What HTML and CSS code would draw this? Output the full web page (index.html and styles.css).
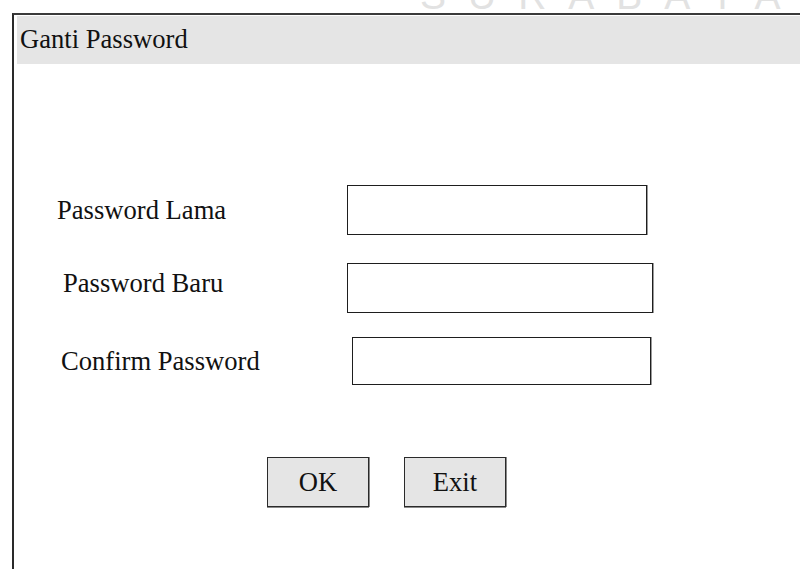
FILE: index.html
```html
<!DOCTYPE html>
<html lang="id">
<head>
<meta charset="utf-8">
<title>Ganti Password</title>
<link rel="stylesheet" href="styles.css">
</head>
<body>
<div class="watermark">SURABAYA</div>
<div class="frame">
  <div class="titlebar">Ganti Password</div>
  <form class="form">
    <div class="field">
      <label class="label" for="pw-old">Password Lama</label>
      <input class="box" id="pw-old" type="password">
    </div>
    <div class="field field-new">
      <label class="label" for="pw-new">Password Baru</label>
      <input class="box" id="pw-new" type="password">
    </div>
    <div class="field field-confirm">
      <label class="label" for="pw-confirm">Confirm Password</label>
      <input class="box" id="pw-confirm" type="password">
    </div>
    <div class="actions">
      <button class="btn" type="submit">OK</button>
      <button class="btn" type="button">Exit</button>
    </div>
  </form>
</div>
</body>
</html>
```

FILE: styles.css
```css
html, body {
  margin: 0;
  height: 100%;
}

body {
  position: relative;
  overflow: hidden;
  background: #fff;
  color: #111;
  font-family: "Liberation Serif", "Times New Roman", serif;
}

/* faint campus name peeking above the window */
.watermark {
  position: absolute;
  top: -24px;
  left: 420px;
  font-family: "Liberation Sans", Arial, sans-serif;
  font-size: 39px;
  line-height: 39px;
  letter-spacing: 22px;
  color: #e2e2e2;
  white-space: nowrap;
}

.frame {
  box-sizing: border-box;
  height: calc(100vh - 13px);
  margin: 13px 0 0 12px;
  padding: 1px 0 0 3px;
  border-top: 2px solid #3a3a3a;
  border-left: 2px solid #2a2a2a;
}

.titlebar {
  box-sizing: border-box;
  height: 48px;
  padding: 8px 0 0 3px;
  background: #e5e5e5;
  font-size: 26.6px;
}

.form {
  margin: 0;
  padding: 121px 0 0 40px;
}

.field {
  display: flex;
  align-items: center;
  font-size: 26.6px;
}

.label {
  box-sizing: border-box;
  width: 290px;
}

.box {
  box-sizing: border-box;
  width: 300px;
  height: 50px;
  margin: 0;
  padding: 0;
  border: 1px solid #1e1e1e;
  box-shadow: 1px 0 0 #9a9a9a;
  background: #fff;
}

.field-new {
  margin-top: 28px;
}

.field-new .label {
  padding-left: 6px;
  margin-bottom: 10px;
}

.field-new .box {
  width: 306px;
}

.field-confirm {
  margin-top: 24px;
}

.field-confirm .label {
  padding-left: 4px;
}

.field-confirm .box {
  width: 299px;
  height: 48px;
  margin-left: 5px;
}

.actions {
  display: flex;
  gap: 35px;
  margin-top: 72px;
  padding-left: 210px;
}

.btn {
  box-sizing: border-box;
  width: 102px;
  height: 50px;
  padding: 0;
  border: 1px solid #2a2a2a;
  box-shadow: 0 1px 0 #8a8a8a, 1px 0 0 #8a8a8a;
  background: #e5e5e5;
  color: #111;
  font-family: "Liberation Serif", "Times New Roman", serif;
  font-size: 26.6px;
}
```
